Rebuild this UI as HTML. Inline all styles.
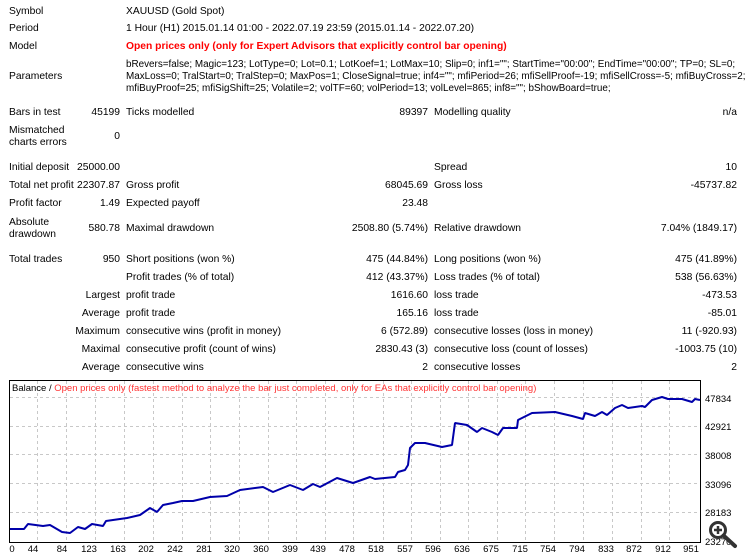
<!DOCTYPE html>
<html><head><meta charset="utf-8"><style>
body{margin:0;width:750px;height:559px;background:#fff;position:relative;overflow:hidden;font-family:"Liberation Sans",Arial,sans-serif;font-size:10.3px;color:#000}
.t{position:absolute;white-space:nowrap;line-height:12px}
.r{text-align:right}
.red{color:#f00;font-weight:bold;font-size:10.3px}
.p{font-size:9.9px}
</style></head><body>
<div class="t" style="left:9px;top:6px">Symbol</div>
<div class="t" style="left:126px;top:6px">XAUUSD (Gold Spot)</div>
<div class="t" style="left:9px;top:23px">Period</div>
<div class="t" style="left:126px;top:23px">1 Hour (H1) 2015.01.14 01:00 - 2022.07.19 23:59 (2015.01.14 - 2022.07.20)</div>
<div class="t" style="left:9px;top:41px">Model</div>
<div class="t red" style="left:126px;top:41px">Open prices only (only for Expert Advisors that explicitly control bar opening)</div>
<div class="t" style="left:9px;top:71px">Parameters</div>
<div class="t p" style="left:126px;top:59px">bRevers=false; Magic=123; LotType=0; Lot=0.1; LotKoef=1; LotMax=10; Slip=0; inf1=""; StartTime="00:00"; EndTime="00:00"; TP=0; SL=0;</div>
<div class="t p" style="left:126px;top:71px">MaxLoss=0; TralStart=0; TralStep=0; MaxPos=1; CloseSignal=true; inf4=""; mfiPeriod=26; mfiSellProof=-19; mfiSellCross=-5; mfiBuyCross=2;</div>
<div class="t p" style="left:126px;top:83px">mfiBuyProof=25; mfiSigShift=25; Volatile=2; volTF=60; volPeriod=13; volLevel=865; inf8=""; bShowBoard=true;</div>

<div class="t" style="left:9px;top:107px">Bars in test</div>
<div class="t r" style="right:630px;top:107px">45199</div>
<div class="t" style="left:126px;top:107px">Ticks modelled</div>
<div class="t r" style="right:322px;top:107px">89397</div>
<div class="t" style="left:434px;top:107px">Modelling quality</div>
<div class="t r" style="right:13px;top:107px">n/a</div>

<div class="t" style="left:9px;top:125px">Mismatched<br>charts errors</div>
<div class="t r" style="right:630px;top:131px">0</div>

<div class="t" style="left:9px;top:162px">Initial deposit</div>
<div class="t r" style="right:630px;top:162px">25000.00</div>
<div class="t" style="left:434px;top:162px">Spread</div>
<div class="t r" style="right:13px;top:162px">10</div>

<div class="t" style="left:9px;top:180px">Total net profit</div>
<div class="t r" style="right:630px;top:180px">22307.87</div>
<div class="t" style="left:126px;top:180px">Gross profit</div>
<div class="t r" style="right:322px;top:180px">68045.69</div>
<div class="t" style="left:434px;top:180px">Gross loss</div>
<div class="t r" style="right:13px;top:180px">-45737.82</div>

<div class="t" style="left:9px;top:198px">Profit factor</div>
<div class="t r" style="right:630px;top:198px">1.49</div>
<div class="t" style="left:126px;top:198px">Expected payoff</div>
<div class="t r" style="right:322px;top:198px">23.48</div>

<div class="t" style="left:9px;top:217px">Absolute<br>drawdown</div>
<div class="t r" style="right:630px;top:223px">580.78</div>
<div class="t" style="left:126px;top:223px">Maximal drawdown</div>
<div class="t r" style="right:322px;top:223px">2508.80 (5.74%)</div>
<div class="t" style="left:434px;top:223px">Relative drawdown</div>
<div class="t r" style="right:13px;top:223px">7.04% (1849.17)</div>

<div class="t" style="left:9px;top:254px">Total trades</div>
<div class="t r" style="right:630px;top:254px">950</div>
<div class="t" style="left:126px;top:254px">Short positions (won %)</div>
<div class="t r" style="right:322px;top:254px">475 (44.84%)</div>
<div class="t" style="left:434px;top:254px">Long positions (won %)</div>
<div class="t r" style="right:13px;top:254px">475 (41.89%)</div>

<div class="t" style="left:126px;top:272px">Profit trades (% of total)</div>
<div class="t r" style="right:322px;top:272px">412 (43.37%)</div>
<div class="t" style="left:434px;top:272px">Loss trades (% of total)</div>
<div class="t r" style="right:13px;top:272px">538 (56.63%)</div>

<div class="t r" style="right:630px;top:290px">Largest</div>
<div class="t" style="left:126px;top:290px">profit trade</div>
<div class="t r" style="right:322px;top:290px">1616.60</div>
<div class="t" style="left:434px;top:290px">loss trade</div>
<div class="t r" style="right:13px;top:290px">-473.53</div>

<div class="t r" style="right:630px;top:308px">Average</div>
<div class="t" style="left:126px;top:308px">profit trade</div>
<div class="t r" style="right:322px;top:308px">165.16</div>
<div class="t" style="left:434px;top:308px">loss trade</div>
<div class="t r" style="right:13px;top:308px">-85.01</div>

<div class="t r" style="right:630px;top:326px">Maximum</div>
<div class="t" style="left:126px;top:326px">consecutive wins (profit in money)</div>
<div class="t r" style="right:322px;top:326px">6 (572.89)</div>
<div class="t" style="left:434px;top:326px">consecutive losses (loss in money)</div>
<div class="t r" style="right:13px;top:326px">11 (-920.93)</div>

<div class="t r" style="right:630px;top:344px">Maximal</div>
<div class="t" style="left:126px;top:344px">consecutive profit (count of wins)</div>
<div class="t r" style="right:322px;top:344px">2830.43 (3)</div>
<div class="t" style="left:434px;top:344px">consecutive loss (count of losses)</div>
<div class="t r" style="right:13px;top:344px">-1003.75 (10)</div>

<div class="t r" style="right:630px;top:362px">Average</div>
<div class="t" style="left:126px;top:362px">consecutive wins</div>
<div class="t r" style="right:322px;top:362px">2</div>
<div class="t" style="left:434px;top:362px">consecutive losses</div>
<div class="t r" style="right:13px;top:362px">2</div>

<svg style="position:absolute;left:0;top:0" width="750" height="559">
<g stroke="#c8c8c8" stroke-dasharray="3,3" stroke-width="1">
<line x1="10" x2="700" y1="397.5" y2="397.5"/><line x1="10" x2="700" y1="426.5" y2="426.5"/><line x1="10" x2="700" y1="454.5" y2="454.5"/><line x1="10" x2="700" y1="483.5" y2="483.5"/><line x1="10" x2="700" y1="512.5" y2="512.5"/>
</g>
<g stroke="#c8c8c8" stroke-dasharray="3,3">
<line x1="37.5" x2="37.5" y1="381" y2="542"/><line x1="66.5" x2="66.5" y1="381" y2="542"/><line x1="95.5" x2="95.5" y1="381" y2="542"/><line x1="124.5" x2="124.5" y1="381" y2="542"/><line x1="153.5" x2="153.5" y1="381" y2="542"/><line x1="182.5" x2="182.5" y1="381" y2="542"/><line x1="210.5" x2="210.5" y1="381" y2="542"/><line x1="239.5" x2="239.5" y1="381" y2="542"/><line x1="268.5" x2="268.5" y1="381" y2="542"/><line x1="296.5" x2="296.5" y1="381" y2="542"/><line x1="325.5" x2="325.5" y1="381" y2="542"/><line x1="353.5" x2="353.5" y1="381" y2="542"/><line x1="383.5" x2="383.5" y1="381" y2="542"/><line x1="411.5" x2="411.5" y1="381" y2="542"/><line x1="440.5" x2="440.5" y1="381" y2="542"/><line x1="468.5" x2="468.5" y1="381" y2="542"/><line x1="497.5" x2="497.5" y1="381" y2="542"/><line x1="525.5" x2="525.5" y1="381" y2="542"/><line x1="554.5" x2="554.5" y1="381" y2="542"/><line x1="583.5" x2="583.5" y1="381" y2="542"/><line x1="612.5" x2="612.5" y1="381" y2="542"/><line x1="641.5" x2="641.5" y1="381" y2="542"/><line x1="669.5" x2="669.5" y1="381" y2="542"/>
</g>
<rect x="9.5" y="380.5" width="691" height="162" fill="none" stroke="#000"/>
<polyline fill="none" stroke="#0000aa" stroke-width="2" stroke-linejoin="bevel" points="10,529 24,529 28,524 43,526 50,525 62,532 70,533 78,527 85,529 92,524 103,526 106,521 127,518 140,515 150,508 157,512 163,505 173,503 182,501 193,501 210,497 227,496 240,490 263,487 273,492 290,485 303,490 313,484 320,487 337,478 353,483 370,477 375,479 395,477 398,472 405,470 408,465 410,448 415,443 425,443 442,447 452,445 455,423 467,425 477,432 482,428 492,432 498,435 503,428 517,428 518,420 532,413 555,412 572,416 583,419 585,413 595,416 602,412 607,415 615,408 622,405 628,408 642,406 645,407 652,400 662,397 668,399 682,399 692,402 695,399 700,400"/>
<text x="12" y="391" font-family="'Liberation Sans',Arial,sans-serif" font-size="9.5">Balance / <tspan fill="#f33">Open prices only (fastest method to analyze the bar just completed, only for EAs that explicitly control bar opening)</tspan></text>
<g font-family="'Liberation Sans',Arial,sans-serif" font-size="9.5" fill="#000">
<text x="705" y="402">47834</text><text x="705" y="430">42921</text><text x="705" y="459">38008</text><text x="705" y="488">33096</text><text x="705" y="516">28183</text><text x="705" y="545">23270</text>
</g>
<g font-family="'Liberation Sans',Arial,sans-serif" font-size="9.5" text-anchor="middle">
<text x="12" y="552">0</text><text x="33" y="552">44</text><text x="62" y="552">84</text><text x="89" y="552">123</text><text x="118" y="552">163</text><text x="146" y="552">202</text><text x="175" y="552">242</text><text x="204" y="552">281</text><text x="232" y="552">320</text><text x="261" y="552">360</text><text x="290" y="552">399</text><text x="318" y="552">439</text><text x="347" y="552">478</text><text x="376" y="552">518</text><text x="405" y="552">557</text><text x="433" y="552">596</text><text x="462" y="552">636</text><text x="491" y="552">675</text><text x="520" y="552">715</text><text x="548" y="552">754</text><text x="577" y="552">794</text><text x="606" y="552">833</text><text x="634" y="552">872</text><text x="663" y="552">912</text><text x="691" y="552">951</text>
</g>
<circle cx="718" cy="530" r="7.5" fill="#fff" stroke="#333" stroke-width="3"/>
<line x1="723.5" y1="535.5" x2="735" y2="546" stroke="#333" stroke-width="4" stroke-linecap="round"/>
<path d="M714 530h8M718 526v8" stroke="#333" stroke-width="2.5"/>
</svg>
</body></html>
